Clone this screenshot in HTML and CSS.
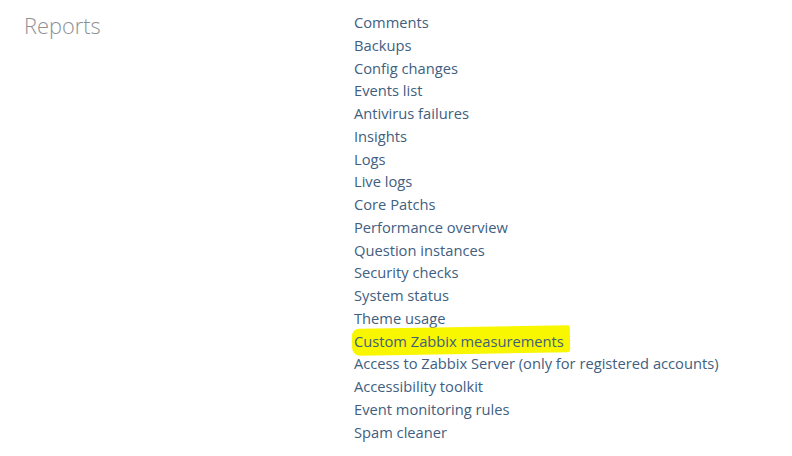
FILE: index.html
```html
<!DOCTYPE html>
<html>
<head>
<meta charset="utf-8">
<link rel="stylesheet" href="styles.css">
</head>
<body>
<div class="page">
  <h2 class="title">Reports</h2>
  <ul class="links">
    <li><a href="#">Comments</a></li>
    <li><a href="#">Backups</a></li>
    <li><a href="#">Config changes</a></li>
    <li><a href="#">Events list</a></li>
    <li><a href="#">Antivirus failures</a></li>
    <li><a href="#">Insights</a></li>
    <li><a href="#">Logs</a></li>
    <li><a href="#">Live logs</a></li>
    <li><a href="#">Core Patchs</a></li>
    <li><a href="#">Performance overview</a></li>
    <li><a href="#">Question instances</a></li>
    <li><a href="#">Security checks</a></li>
    <li><a href="#">System status</a></li>
    <li><a href="#">Theme usage</a></li>
    <li><a href="#" class="marked">Custom Zabbix measurements</a></li>
    <li><a href="#">Access to Zabbix Server (only for registered accounts)</a></li>
    <li><a href="#">Accessibility toolkit</a></li>
    <li><a href="#">Event monitoring rules</a></li>
    <li><a href="#">Spam cleaner</a></li>
  </ul>
</div>
</body>
</html>
```

FILE: styles.css
```css
html, body {
  margin: 0;
  padding: 0;
  background: #ffffff;
}
.page {
  display: flex;
  padding: 11px 0 0 24px;
  font-family: "Open Sans", "Noto Sans", sans-serif;
}
.title {
  width: 330px;
  margin: 1px 0 0 0;
  font-size: 21.8px;
  font-weight: 300;
  color: #8d9196;
  line-height: 28px;
}
.links {
  list-style: none;
  margin: 0;
  padding: 0;
}
.links li {
  font-size: 14.7px;
  line-height: 22.75px;
  height: 22.75px;
  white-space: nowrap;
}
.links a {
  color: #41607f;
  text-decoration: none;
}
.marked {
  position: relative;
  z-index: 0;
}
.marked::before {
  content: "";
  position: absolute;
  z-index: -1;
  left: -2px;
  right: -6px;
  top: -4px;
  bottom: -3px;
  background: #f8f700;
  border-radius: 7px 2px 3px 8px;
  transform: rotate(-1deg);
}
```
